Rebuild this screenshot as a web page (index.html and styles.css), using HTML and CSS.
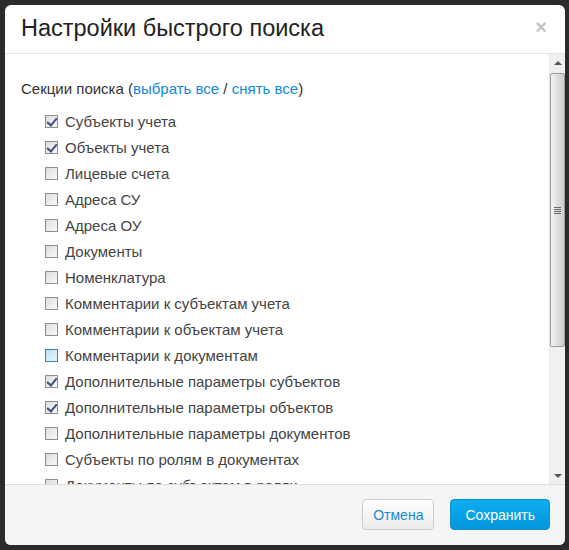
FILE: index.html
```html
<!DOCTYPE html>
<html lang="ru">
<head>
    <meta charset="UTF-8">
    <title>Настройки быстрого поиска</title>
    <link rel="stylesheet" href="styles.css">
</head>
<body>
    <div class="modal">
        <div class="modal-header">
            <h3>Настройки быстрого поиска</h3>
            <span class="close">&times;</span>
        </div>

        <div class="modal-body">
            <div class="body-content">
                <div class="sections-title">
                    Секции поиска (<a href="#">выбрать все</a> / <a href="#">снять все</a>)
                </div>
                <ul class="sections">
                    <li><span class="box checked"></span>Субъекты учета</li>
                    <li><span class="box checked"></span>Объекты учета</li>
                    <li><span class="box"></span>Лицевые счета</li>
                    <li><span class="box"></span>Адреса СУ</li>
                    <li><span class="box"></span>Адреса ОУ</li>
                    <li><span class="box"></span>Документы</li>
                    <li><span class="box"></span>Номенклатура</li>
                    <li><span class="box"></span>Комментарии к субъектам учета</li>
                    <li><span class="box"></span>Комментарии к объектам учета</li>
                    <li><span class="box hover"></span>Комментарии к документам</li>
                    <li><span class="box checked"></span>Дополнительные параметры субъектов</li>
                    <li><span class="box checked"></span>Дополнительные параметры объектов</li>
                    <li><span class="box"></span>Дополнительные параметры документов</li>
                    <li><span class="box"></span>Субъекты по ролям в документах</li>
                    <li><span class="box"></span>Документы по субъектам в ролях</li>
                </ul>
            </div>

            <!-- fake scrollbar, the screenshot hides native ones -->
            <div class="scrollbar">
                <div class="sb-btn sb-up"></div>
                <div class="sb-track">
                    <div class="sb-thumb"><span class="grip"></span></div>
                </div>
                <div class="sb-btn sb-down"></div>
            </div>
        </div>

        <div class="modal-footer">
            <button class="btn">Отмена</button>
            <button class="btn btn-primary">Сохранить</button>
        </div>
    </div>
</body>
</html>
```

FILE: styles.css
```css
* {
    margin: 0;
    padding: 0;
    box-sizing: border-box;
}

body {
    background: #2b2b2b;
    padding: 5px;
    font-family: "Liberation Sans", Arial, sans-serif;
    font-size: 15px;
    color: #333;
}

.modal {
    width: 560px;
    height: 540px;
    background: #fff;
    border-radius: 6px;
    display: flex;
    flex-direction: column;
    overflow: hidden;
}

.modal-header {
    height: 49px;
    flex-shrink: 0;
    border-bottom: 1px solid #e5e5e5;
    padding: 0 16px;
    display: flex;
    align-items: center;
    justify-content: space-between;
}

.modal-header h3 {
    font-size: 23.5px;
    font-weight: normal;
    color: #222;
    padding-bottom: 2px;
}

.close {
    color: #c4c4c4;
    font-size: 20px;
    font-weight: bold;
    margin-right: 2px;
    margin-bottom: 4px;
}

.modal-body {
    flex: 1;
    min-height: 0;
    display: flex;
}

.body-content {
    flex: 1;
    overflow: hidden;
    padding: 25px 0 0 16px;
}

.scrollbar {
    width: 16px;
    flex-shrink: 0;
    background: #f0f0f0;
    border-left: 1px solid #e8e8e8;
    display: flex;
    flex-direction: column;
}

.sb-btn {
    height: 17px;
    display: flex;
    align-items: center;
    justify-content: center;
}

.sb-up::before,
.sb-down::before {
    content: "";
    border-left: 4px solid transparent;
    border-right: 4px solid transparent;
}

.sb-up::before {
    border-bottom: 4px solid #555;
}

.sb-down::before {
    border-top: 4px solid #555;
}

.sb-track {
    flex: 1;
    padding-top: 2px;
}

.sb-thumb {
    height: 274px;
    border: 1px solid #9c9c9c;
    border-radius: 2px;
    background: linear-gradient(to right, #f4f4f4, #dcdcdc 55%, #cdcdcd);
    display: flex;
    align-items: center;
    justify-content: center;
}

.grip {
    width: 7px;
    height: 7px;
    background: repeating-linear-gradient(#6a6a6a 0 1px, transparent 1px 2px);
}

.sections-title {
    line-height: 20px;
    margin-bottom: 9px;
}

.sections-title a {
    color: #0e8ad8;
    text-decoration: none;
}

.sections {
    list-style: none;
    padding-left: 24px;
}

.sections li {
    height: 26px;
    display: flex;
    align-items: center;
    color: #444;
    white-space: nowrap;
}

.box {
    width: 13px;
    height: 13px;
    border: 1px solid #8e8f8f;
    background: linear-gradient(135deg, #dcdcdc, #fafafa);
    margin-right: 7px;
    position: relative;
    flex-shrink: 0;
}

.box.hover {
    border-color: #3c7fb1;
    background: linear-gradient(135deg, #b9dff5, #eaf6fd);
}

.box.checked::after {
    content: "";
    position: absolute;
    left: 3px;
    top: 0;
    width: 4px;
    height: 8px;
    border: solid #3b4f8a;
    border-width: 0 2px 2px 0;
    transform: rotate(40deg);
}

.modal-footer {
    height: 61px;
    flex-shrink: 0;
    background: #f5f5f5;
    border-top: 1px solid #ddd;
    padding: 14px 15px 0;
    display: flex;
    justify-content: flex-end;
    align-items: flex-start;
    gap: 16px;
}

.btn {
    height: 31px;
    padding: 0 10px;
    font-family: "Liberation Sans", Arial, sans-serif;
    font-size: 14px;
    border-radius: 4px;
    border: 1px solid #ccc;
    background: linear-gradient(#fff, #ececec);
    color: #1a8ad4;
    cursor: pointer;
}

.btn-primary {
    border-color: #0a8fd1;
    background: linear-gradient(#0cadee, #0496dc);
    color: #fff;
    padding: 0 14px;
}
```
